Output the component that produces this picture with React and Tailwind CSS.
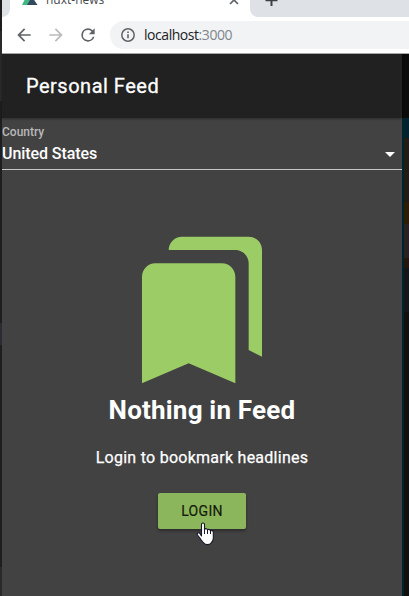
import React from 'react';

function TabStrip() {
  return (
    <div className="flex h-[17px] shrink-0 overflow-hidden bg-[#dee1e6]">
      <div className="w-2 shrink-0 rounded-br-lg bg-[#dee1e6] shadow-[0_0_0_8px_#ffffff]" />
      <div className="relative flex h-[17px] w-[240px] shrink-0 bg-white">
        <svg className="ml-3 h-[5px] w-4 shrink-0" viewBox="0 0 16 5">
          <path d="M0 5 3-1h6l3 6z" fill="#3fb984" />
          <path d="M5 5 8.5-1h3L15.5 5z" fill="#34495e" />
        </svg>
        <span className="-mt-[9px] ml-[8px] font-['Open_Sans',sans-serif] text-[12px] leading-[18px] text-[#45494d]">
          nuxt-news
        </span>
        <svg className="mr-[11px] ml-auto h-[5px] w-[10px]" viewBox="0 0 10 5">
          <path d="M1-4 9 4M9-4 1 4" stroke="#5f6368" strokeWidth="1.7" />
        </svg>
      </div>
      <div className="h-[17px] flex-1 bg-white">
        <div className="h-[17px] rounded-bl-lg bg-[#dee1e6]">
          <svg className="ml-[15px] h-[6px] w-[13px]" viewBox="0 0 13 6">
            <path d="M6.5-6V6M.5 .3h12" stroke="#3c4043" strokeWidth="2" />
          </svg>
        </div>
      </div>
    </div>
  );
}

function AddressBar() {
  return (
    <div className="flex h-[37px] shrink-0 items-start border-b border-[#a9a9a9] bg-white pt-1 pl-[12px]">
      <svg className="mt-[4px] h-5 w-5" viewBox="0 0 24 24" fill="#5f6368">
        <path d="M20 11H7.83l5.59-5.59L12 4l-8 8 8 8 1.41-1.41L7.83 13H20z" />
      </svg>
      <svg className="mt-[4px] ml-3 h-5 w-5" viewBox="0 0 24 24" fill="#bababc">
        <path d="m12 4-1.41 1.41L16.17 11H4v2h12.17l-5.58 5.59L12 20l8-8z" />
      </svg>
      <svg className="mt-[4px] ml-3 h-5 w-5" viewBox="0 0 24 24" fill="#5f6368">
        <path d="M17.65 6.35A7.96 7.96 0 0 0 12 4a8 8 0 1 0 7.73 10h-2.08A6 6 0 1 1 12 6c1.66 0 3.14.69 4.22 1.78L13 11h7V4z" />
      </svg>
      <div className="ml-[12px] flex h-7 flex-1 items-center rounded-l-full bg-[#f1f3f4] pl-[10px]">
        <svg className="h-4 w-4" viewBox="0 0 16 16" fill="none">
          <circle cx="8" cy="8" r="6.2" stroke="#5f6368" strokeWidth="1.5" />
          <path d="M8 7.2v4M8 4.4v1.6" stroke="#5f6368" strokeWidth="1.6" />
        </svg>
        <span className="ml-2 font-['Open_Sans',sans-serif] text-[14px] leading-5 tracking-[-0.45px] text-[#202124]">
          localhost<span className="text-[#80868b]">:3000</span>
        </span>
      </div>
    </div>
  );
}

function HandCursor() {
  return (
    <svg className="absolute top-[29px] left-[38px] h-6 w-[19px]" viewBox="0 0 19 24">
      <path
        d="M5.5 14V2.5Q5.5 1 7 1t1.500 1.500V7.500Q9 6.500 10.200 6.700T11.500 8Q12.200 7.200 13.200 7.500T14.500 9Q15.300 8.200 16.300 8.700T17.300 10V16Q17.300 19 15.500 20.500Q14 22.600 11.500 22.600T7.300 20.500Q5 18 3.500 15.500L1.500 13Q.7 11.700 2 11T4 11.700Z"
        fill="#fff"
        stroke="#17172a"
        strokeWidth="1.1"
        strokeLinejoin="round"
      />
      <path d="M8.500 7v5M11.500 8v4M14.500 9v3" stroke="#17172a" strokeWidth="1" />
    </svg>
  );
}

function FeedPanel() {
  return (
    <div className="flex w-[400px] shrink-0 flex-col bg-[#424242] text-white">
      <header className="z-10 flex h-16 shrink-0 items-center bg-[#212121] px-6 shadow-[0_1px_2px_rgba(0,0,0,0.35)]">
        <h1 className="text-[20px] leading-5 font-normal tracking-[0.5px] [-webkit-text-stroke:0.3px_#fff]">
          Personal Feed
        </h1>
      </header>
      <div className="flex h-[52px] shrink-0 flex-col border-b border-[#c6c6c6]">
        <label className="mt-[4px] text-[12px] leading-5 font-medium text-[#b9b9b9]">Country</label>
        <div className="mt-[2px] flex h-5 items-center justify-between">
          <span className="text-[16px] leading-5 font-medium tracking-[-0.08px]">United States</span>
          <svg className="h-6 w-6" viewBox="0 0 24 24">
            <path d="m7 10 5 5 5-5z" fill="#fff" />
          </svg>
        </div>
      </div>
      <main className="flex flex-1 flex-col items-center pt-[59.5px]">
        <svg className="h-40 w-40 shrink-0" viewBox="0 0 24 24" fill="#9ccc65">
          <path d="m19 18 2 1V3c0-1.100-.9-2-2-2H8.990C7.890 1 7 1.900 7 3h10c1.100 0 2 .9 2 2zM15 5H5c-1.100 0-2 .9-2 2v16l7-3 7 3V7c0-1.100-.9-2-2-2" />
        </svg>
        <h2 className="mt-[3px] text-[26px] leading-[34px] font-bold tracking-[0.2px]">Nothing in Feed</h2>
        <p className="mt-[19px] text-[16px] leading-6 tracking-[0.26px] [-webkit-text-stroke:0.25px_#fff]">
          Login to bookmark headlines
        </p>
        <div className="relative mt-[23px]">
          <button className="h-9 w-[88px] rounded-[2px] bg-[#8cb65b] pt-px text-[14px] font-normal tracking-[0.3px] text-[#141b0d] shadow-[0_2px_3px_rgba(0,0,0,0.35)] [-webkit-text-stroke:0.2px_#141b0d]">
            LOGIN
          </button>
          <HandCursor />
        </div>
      </main>
    </div>
  );
}

function Backdrop() {
  return (
    <div className="flex flex-1 flex-col bg-[#00232d]">
      <div className="h-16 shrink-0 bg-[#0a0a0a]" />
      <div className="ml-[2px] mt-5 flex flex-1 flex-col bg-[#101010]">
        <div className="h-16 bg-[#211c16]" />
        <div className="h-[22px] bg-[#2d1c06]" />
        <div className="h-[34px] bg-[#282320]" />
        <div className="h-[10px] bg-[#24180e]" />
        <div className="h-11 bg-[#141719]" />
      </div>
    </div>
  );
}

export default function App() {
  return (
    <div className="flex h-[596px] w-[409px] overflow-hidden font-[Roboto,sans-serif]">
      <div className="flex w-[2px] shrink-0 flex-col bg-[#1e1e1e]">
        <div className="h-[31px] bg-[#1c1c1c]" />
        <div className="h-[70px] bg-[#2b2b2e]" />
        <div className="h-[222px] bg-[#1e1e1e]" />
        <div className="h-[22px] bg-[#2b2b33]" />
        <div className="h-[222px] bg-[#1e1e1e]" />
        <div className="flex-1 bg-[#2a2a2a]" />
      </div>
      <div className="flex min-w-0 flex-1 flex-col">
        <TabStrip />
        <AddressBar />
        <div className="flex min-h-0 flex-1">
          <FeedPanel />
          <Backdrop />
        </div>
      </div>
    </div>
  );
}
